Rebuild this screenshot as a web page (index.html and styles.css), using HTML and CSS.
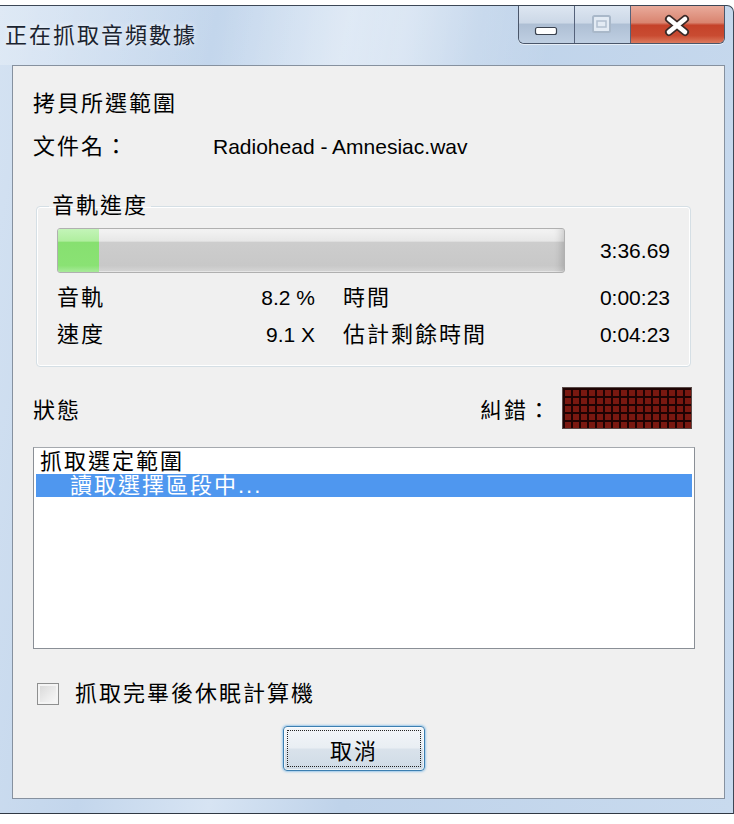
FILE: index.html
```html
<!DOCTYPE html>
<html lang="zh-Hant">
<head>
    <meta charset="UTF-8">
    <title>正在抓取音頻數據</title>
    <link rel="stylesheet" href="styles.css">
</head>
<body>

<div class="window">
    <!-- 標題列 -->
    <div class="titlebar">
        <span class="title">正在抓取音頻數據</span>
        <div class="caption-btns">
            <div class="cap-btn cap-min">
                <svg width="55" height="37" viewBox="0 0 55 37">
                    <rect x="16.5" y="21.5" width="21" height="7" rx="2" fill="#fff" stroke="#3b4350" stroke-width="1.2"/>
                </svg>
            </div>
            <div class="cap-btn cap-max">
                <svg width="55" height="37" viewBox="0 0 55 37">
                    <rect x="18" y="10" width="17" height="16" rx="1.5" fill="#e3ebf4" stroke="#a9b8c9" stroke-width="2"/>
                    <rect x="22" y="15" width="9" height="6" fill="none" stroke="#b2c0cf" stroke-width="1.5"/>
                </svg>
            </div>
            <div class="cap-btn cap-close">
                <svg width="93" height="37" viewBox="0 0 93 37">
                    <path d="M38 13 L54 26 M54 13 L38 26" stroke="#3a2a28" stroke-width="8" stroke-linecap="round"/>
                    <path d="M38 13 L54 26 M54 13 L38 26" stroke="#ffffff" stroke-width="4.5" stroke-linecap="round"/>
                </svg>
            </div>
        </div>
    </div>

    <!-- 客戶區 -->
    <div class="client">
        <div class="line">拷貝所選範圍</div>
        <div class="line file-row">
            <span class="file-label">文件名：</span>
            <span class="latin">Radiohead - Amnesiac.wav</span>
        </div>

        <fieldset class="group">
            <legend>音軌進度</legend>
            <div class="progress-row">
                <div class="progress">
                    <div class="progress-fill" style="width: 8.2%"></div>
                </div>
                <span class="latin">3:36.69</span>
            </div>
            <div class="stats">
                <span>音軌</span>
                <span class="latin num">8.2 %</span>
                <span class="lbl2">時間</span>
                <span class="latin num">0:00:23</span>
                <span>速度</span>
                <span class="latin num">9.1 X</span>
                <span class="lbl2">估計剩餘時間</span>
                <span class="latin num">0:04:23</span>
            </div>
        </fieldset>

        <div class="status-row">
            <span class="status-label">狀態</span>
            <div class="ecc">
                <span class="status-label">糾錯：</span>
                <div class="led"></div>
            </div>
        </div>

        <div class="listbox">
            <div class="item">抓取選定範圍</div>
            <div class="item selected">讀取選擇區段中...</div>
        </div>

        <label class="check-row">
            <span class="checkbox"></span>
            <span>抓取完畢後休眠計算機</span>
        </label>

        <div class="btn-row">
            <button class="btn"><span class="btn-focus">取消</span></button>
        </div>
    </div>
</div>

</body>
</html>
```

FILE: styles.css
```css
body {
    margin: 0;
    padding: 0;
    background-color: #ffffff;
    font-family: "Liberation Sans", "Noto Sans CJK TC", sans-serif;
    font-size: 22px;
    letter-spacing: 2px;
    color: #000;
}

.latin {
    font-size: 21px;
    letter-spacing: 0;
}

/* 視窗外框 */
.window {
    width: 734px;
    height: 809px;
    margin-top: 5px;
    box-sizing: border-box;
    border-top: 1px solid #3c4756;
    border-right: 1px solid #3c4756;
    border-bottom: 1px solid #2f3843;
    border-top-right-radius: 7px;
    background: linear-gradient(100deg, #d4e2f2 0%, #c3d6ec 25%, #d7e4f3 40%, #bfd3ea 55%, #c8daee 100%);
    display: flex;
    flex-direction: column;
}

.titlebar {
    height: 59px;
    display: flex;
    justify-content: space-between;
    align-items: flex-start;
    background: linear-gradient(100deg, rgba(255,255,255,0.25) 0%, rgba(255,255,255,0) 30%, rgba(255,255,255,0.3) 55%, rgba(255,255,255,0) 75%);
}

.title {
    align-self: center;
    padding-left: 5px;
    line-height: 24px;
    color: #1b2430;
    text-shadow: 0 0 6px rgba(255,255,255,0.9);
}

.caption-btns {
    display: flex;
    margin-right: 8px;
    border: 1px solid #4a566a;
    border-top: none;
    border-radius: 0 0 6px 6px;
    overflow: hidden;
    box-shadow: 0 1px 0 rgba(255,255,255,0.6);
}

.cap-btn {
    height: 37px;
    display: flex;
}

.cap-min,
.cap-max {
    width: 55px;
    background: linear-gradient(to bottom, #dde6f1 0%, #ccd8e7 45%, #aebfd4 50%, #bfcfe2 100%);
    border-right: 1px solid #55627a;
}

.cap-close {
    width: 93px;
    background: linear-gradient(to bottom, #e9ab9b 0%, #d98470 45%, #c5422a 52%, #c94b31 80%, #dc7a5e 100%);
}

/* 客戶區 */
.client {
    height: 734px;
    margin: 0 8px 0 12px;
    box-sizing: border-box;
    border: 1px solid #86919f;
    background-color: #f0f0f0;
    padding: 26px 29px 0 20px;
}

.line {
    line-height: 24px;
}

.file-row {
    margin-top: 19px;
    display: flex;
    align-items: center;
}

.file-label {
    width: 180px;
}

.group {
    margin: 35px 4px 0 3px;
    padding: 10px 20px 19px;
    border: 1px solid #d5dfe5;
    border-radius: 4px;
    box-shadow: inset 0 0 0 1px #ffffff;
    min-width: 0;
}

.group legend {
    line-height: 24px;
    padding: 0 3px;
    margin-left: -8px;
}

.progress-row {
    display: flex;
    justify-content: space-between;
    align-items: center;
}

.progress {
    width: 508px;
    height: 45px;
    box-sizing: border-box;
    border: 1px solid #b0b0b0;
    border-radius: 3px;
    overflow: hidden;
    background: linear-gradient(to bottom, #f4f4f4 0%, #e7e7e7 28%, #cdcdcd 31%, #c8c8c8 85%, #d6d6d6 100%);
    box-shadow: inset -8px 0 8px -6px rgba(0,0,0,0.18), inset 0 -1px 0 #e8e8e8;
}

.progress-fill {
    height: 100%;
    background: linear-gradient(to bottom, #c3f4b8 0%, #b0ee9f 28%, #87e070 31%, #8ae274 85%, #a8ea9a 100%);
}

.stats {
    margin-top: 13px;
    display: grid;
    grid-template-columns: 143px 115px 1fr auto;
    row-gap: 13px;
    line-height: 24px;
}

.num {
    text-align: right;
}

.lbl2 {
    padding-left: 28px;
}

.status-row {
    margin: 20px 3px 0 0;
    display: flex;
    justify-content: space-between;
    align-items: center;
}

.status-label {
    line-height: 24px;
    padding-top: 5px;
}

.ecc {
    display: flex;
    align-items: center;
    gap: 10px;
}

/* 紅色點陣 */
.led {
    width: 130px;
    height: 42px;
    box-sizing: border-box;
    border: 1px solid #5a4a48;
    background-color: #7a1810;
    background-image:
        repeating-linear-gradient(to right, #1e0303 0 2px, transparent 2px 8px),
        repeating-linear-gradient(to bottom, #1e0303 0 2px, transparent 2px 8px);
}

.listbox {
    margin-top: 18px;
    height: 202px;
    box-sizing: border-box;
    border: 1px solid #8a8f96;
    border-top-color: #a5a9ae;
    background-color: #ffffff;
    padding: 2px;
}

.item {
    line-height: 24px;
    padding-left: 4px;
}

.item.selected {
    background-color: #4f97ef;
    color: #ffffff;
    padding-left: 34px;
    line-height: 23px;
}

.check-row {
    margin-top: 33px;
    margin-left: 4px;
    display: flex;
    align-items: center;
    gap: 16px;
    line-height: 24px;
}

.checkbox {
    width: 22px;
    height: 22px;
    box-sizing: border-box;
    border: 1px solid #8e8f8f;
    background: linear-gradient(135deg, #d6d6d6 0%, #ededed 60%, #fafafa 100%);
    box-shadow: inset 0 0 0 2px #f4f4f4;
}

.btn-row {
    margin-top: 20px;
    padding-left: 250px;
}

.btn {
    width: 142px;
    height: 45px;
    padding: 3px;
    border: 1px solid #3c7fb1;
    border-radius: 4px;
    background: linear-gradient(to bottom, #f3f6f9 0%, #e9eef3 48%, #d9e2eb 52%, #cfdbe6 100%);
    box-shadow: 0 0 2px 1px rgba(90,170,230,0.55), inset 0 0 0 1px rgba(255,255,255,0.6);
    font-family: inherit;
    font-size: 22px;
    letter-spacing: 2px;
    color: #000;
    cursor: pointer;
}

.btn-focus {
    display: flex;
    height: 100%;
    box-sizing: border-box;
    align-items: center;
    justify-content: center;
    border: 1px dotted #222;
}
```
